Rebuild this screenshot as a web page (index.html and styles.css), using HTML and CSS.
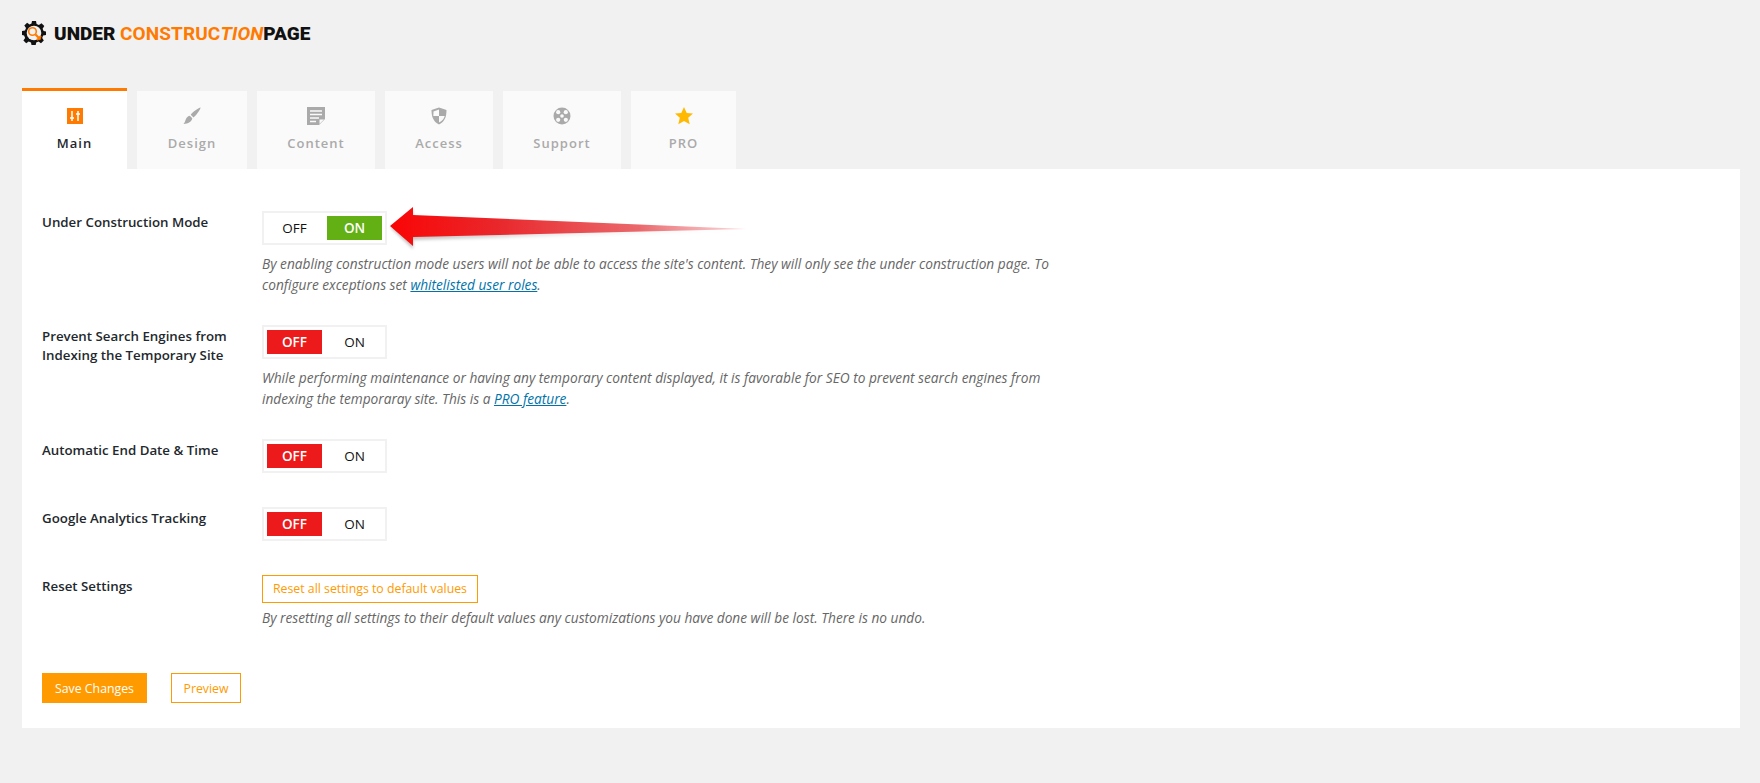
FILE: index.html
```html
<!DOCTYPE html>
<html lang="en">
<head>
    <meta charset="UTF-8">
    <title>Under Construction Page</title>
    <link rel="stylesheet" href="styles.css">
</head>
<body>
    <div class="logo">
        <svg class="logo-gear" width="24" height="24" viewBox="0 0 24 24">
            <path fill="#111" d="M10 0h4l.6 3 2.3 1 2.6-1.7 2.8 2.8L20.6 7.700l1 2.300 2.400.600v3.400l-2.900.600-.9 2.300 1.600 2.600-2.800 2.800-2.500-1.700-2.300 1-.600 2.900h-4l-.6-2.900-2.300-1-2.500 1.700-2.800-2.800 1.700-2.600-1-2.300L0 14v-4l3-.6 1-2.300-1.700-2.500L5.100 1.800l2.500 1.700 1.900-.9z"/>
            <circle cx="12" cy="12" r="7.300" fill="#f1f1f1"/>
            <circle cx="10.500" cy="10.500" r="3.800" fill="none" stroke="#ff7a00" stroke-width="1.600"/>
            <path fill="none" stroke="#ff7a00" stroke-width="2.200" d="M13.500 13.500l5 5M15 19l4-4"/>
        </svg>
        <span class="logo-text">UNDER <span class="logo-orange">CONSTRUC<i>TION</i></span><span class="logo-page">PAGE</span></span>
    </div>

    <div class="tabs">
        <div class="tab active tab-main">
            <svg width="16" height="16" viewBox="0 0 16 16">
                <rect width="16" height="16" fill="#ff7a00"/>
                <path fill="none" stroke="#fff" stroke-width="1.500" d="M5 3v10M11 3v10M3 10h4M9 6h4"/>
            </svg>
            <span>Main</span>
        </div>
        <div class="tab tab-design">
            <svg width="18" height="18" viewBox="0 0 18 18">
                <path fill="#aaa" d="M17.500.500c.5.500-3.500 7.500-7 10l-2.800-2.800C10 4.500 17 0 17.500.500zM6.800 8.800l2.500 2.500c-.5 3.500-4 5.500-8.800 5.700 2.500-2 1.500-7 6.300-8.200z"/>
            </svg>
            <span>Design</span>
        </div>
        <div class="tab tab-content">
            <svg width="18" height="18" viewBox="0 0 18 18">
                <path fill="#aaa" d="M0 0h18v12l-6 6H0z"/>
                <path fill="none" stroke="#fafafa" stroke-width="1.400" d="M3 4h12M3 7.500h12M3 11h9M3 14.500h6"/>
                <path fill="#fafafa" d="M12.500 17v-4.500H17z"/>
            </svg>
            <span>Content</span>
        </div>
        <div class="tab tab-access">
            <svg width="16" height="17" viewBox="0 0 16 17">
                <path fill="#aaa" d="M8 0l7.500 2.500C15.500 9 14 14 8 17 2 14 .5 9 .5 2.500z"/>
                <path fill="#fafafa" d="M8 2v6.500H2.300c.1-1.500.2-3 .2-4.500zM8 8.500h5.700c-.7 3-2.500 5-5.700 6.600z"/>
            </svg>
            <span>Access</span>
        </div>
        <div class="tab tab-support">
            <svg width="18" height="18" viewBox="0 0 18 18">
                <circle cx="9" cy="9" r="8.500" fill="#aaa"/>
                <circle cx="9" cy="9" r="1.800" fill="#fafafa"/>
                <circle cx="5.200" cy="5.200" r="2.100" fill="#fafafa"/>
                <circle cx="12.800" cy="5.200" r="2.100" fill="#fafafa"/>
                <circle cx="5.200" cy="12.800" r="2.100" fill="#fafafa"/>
                <circle cx="12.800" cy="12.800" r="2.100" fill="#fafafa"/>
            </svg>
            <span>Support</span>
        </div>
        <div class="tab tab-pro">
            <svg width="18" height="18" viewBox="0 0 18 18">
                <path fill="#ffb900" d="M9 0l2.700 6 6.300.6-4.800 4.200 1.500 6.500L9 13.900l-5.700 3.400 1.500-6.500L0 6.600 6.300 6z"/>
            </svg>
            <span>PRO</span>
        </div>
    </div>

    <div class="panel">
        <svg class="arrow" width="364" height="56" viewBox="0 0 364 56">
            <defs>
                <linearGradient id="arrow-fill" x1="0" x2="1" y1="0" y2="0">
                    <stop offset="0" stop-color="#fa0505"/>
                    <stop offset="0.300" stop-color="#e9272b"/>
                    <stop offset="0.700" stop-color="#e8585c" stop-opacity="0.900"/>
                    <stop offset="1" stop-color="#f08085" stop-opacity="0.300"/>
                </linearGradient>
                <linearGradient id="arrow-shadow" x1="0" x2="1" y1="0" y2="0">
                    <stop offset="0" stop-color="#000" stop-opacity="0.260"/>
                    <stop offset="0.500" stop-color="#000" stop-opacity="0.060"/>
                    <stop offset="1" stop-color="#000" stop-opacity="0"/>
                </linearGradient>
                <filter id="arrow-blur"><feGaussianBlur stdDeviation="1.800"/></filter>
            </defs>
            <path fill="url(#arrow-shadow)" filter="url(#arrow-blur)" d="M6 23L28 5v9l330 12-330 9v9z"/>
            <path fill="url(#arrow-fill)" d="M5 21L28 2v8l334 14-334 8v9z"/>
        </svg>

        <div class="row">
            <div class="label">Under Construction Mode</div>
            <div class="field">
                <div class="toggle">
                    <span class="opt">OFF</span>
                    <span class="opt on">ON</span>
                </div>
                <p class="desc">By enabling construction mode users will not be able to access the site's content. They will only see the under construction page. To configure exceptions set <a href="#">whitelisted user roles</a>.</p>
            </div>
        </div>

        <div class="row">
            <div class="label">Prevent Search Engines from Indexing the Temporary Site</div>
            <div class="field">
                <div class="toggle">
                    <span class="opt off">OFF</span>
                    <span class="opt">ON</span>
                </div>
                <p class="desc">While performing maintenance or having any temporary content displayed, it is favorable for SEO to prevent search engines from indexing the temporaray site. This is a <a href="#">PRO feature</a>.</p>
            </div>
        </div>

        <div class="row row-short">
            <div class="label">Automatic End Date &amp; Time</div>
            <div class="field">
                <div class="toggle">
                    <span class="opt off">OFF</span>
                    <span class="opt">ON</span>
                </div>
            </div>
        </div>

        <div class="row row-short">
            <div class="label">Google Analytics Tracking</div>
            <div class="field">
                <div class="toggle">
                    <span class="opt off">OFF</span>
                    <span class="opt">ON</span>
                </div>
            </div>
        </div>

        <div class="row row-reset">
            <div class="label">Reset Settings</div>
            <div class="field">
                <a class="btn btn-outline btn-reset" href="#">Reset all settings to default values</a>
                <p class="desc desc-reset">By resetting all settings to their default values any customizations you have done will be lost. There is no undo.</p>
            </div>
        </div>

        <div class="actions">
            <a class="btn btn-save" href="#">Save Changes</a>
            <a class="btn btn-outline btn-preview" href="#">Preview</a>
        </div>
    </div>
</body>
</html>
```

FILE: styles.css
```css
* {
    box-sizing: border-box;
}

body {
    background: #f1f1f1;
    margin: 0;
    padding: 0 20px 0 22px;
    font-family: 'Open Sans', 'Noto Sans', sans-serif;
    font-size: 13px;
    color: #23282d;
}

.logo {
    display: flex;
    align-items: center;
    gap: 8px;
    height: 88px;
    padding-bottom: 22px;
}

.logo-text {
    font-family: Roboto, sans-serif;
    font-weight: 900;
    font-size: 19px;
    color: #111;
    white-space: nowrap;
}

.logo-orange {
    color: #ff7a00;
    font-weight: 700;
    letter-spacing: 0.1px;
}

.tabs {
    display: flex;
    gap: 10px;
    align-items: flex-end;
}

.tab {
    display: flex;
    flex-direction: column;
    align-items: center;
    height: 78px;
    padding-top: 16px;
    background: #fafafa;
    color: #aaa;
    font-size: 13px;
    font-weight: 600;
    letter-spacing: 1px;
}

.tab svg {
    display: block;
    height: 18px;
}

.tab span {
    margin-top: 9px;
}

.tab.active {
    height: 81px;
    background: #fff;
    border-top: 3px solid #ff7a00;
    color: #23282d;
}

.tab-main { width: 105px; }
.tab-design { width: 110px; }
.tab-content { width: 118px; }
.tab-access { width: 108px; }
.tab-support { width: 118px; }
.tab-pro { width: 105px; }

.panel {
    position: relative;
    background: #fff;
    height: 559px;
    padding: 42px 20px 0;
}

.arrow {
    position: absolute;
    left: 363px;
    top: 36px;
}

.row {
    display: grid;
    grid-template-columns: 220px 1fr;
    padding-bottom: 30px;
}

.row-short {
    padding-bottom: 34px;
}

.row-reset {
    padding-bottom: 0;
}

.label {
    font-size: 13.3px;
    font-weight: 600;
    line-height: 19px;
    width: 190px;
    padding-top: 2px;
}

.toggle {
    display: inline-flex;
    width: 125px;
    height: 34px;
    padding: 3px;
    border: 2px solid #f1f1f1;
    background: #fff;
    vertical-align: top;
}

.opt {
    width: 55px;
    height: 24px;
    line-height: 24px;
    text-align: center;
    font-size: 13.5px;
    font-weight: 500;
    color: #111;
}

.opt + .opt {
    margin-left: 5px;
}

.opt.on {
    background: #63b014;
    color: #fff;
    font-weight: 600;
}

.opt.off {
    background: #ec1a1a;
    color: #fff;
    font-weight: 600;
}

.desc {
    margin: 8px 0 0;
    max-width: 830px;
    font-size: 13.7px;
    font-style: italic;
    line-height: 21px;
    color: #666;
}

.desc a {
    color: #0073aa;
}

.btn {
    display: inline-block;
    text-decoration: none;
    font-size: 12.3px;
}

.btn-outline {
    border: 1px solid #ff9b00;
    color: #ff9b00;
    background: #fff;
}

.btn-reset {
    height: 28px;
    line-height: 26px;
    padding: 0 10px;
}

.desc-reset {
    margin-top: 4px;
    max-width: none;
}

.actions {
    display: flex;
    gap: 24px;
    margin-top: 45px;
}

.btn-save {
    width: 105px;
    height: 30px;
    line-height: 31px;
    text-align: center;
    background: #ff9b00;
    color: #fff;
}

.btn-preview {
    width: 70px;
    height: 30px;
    line-height: 29px;
    text-align: center;
}
```
